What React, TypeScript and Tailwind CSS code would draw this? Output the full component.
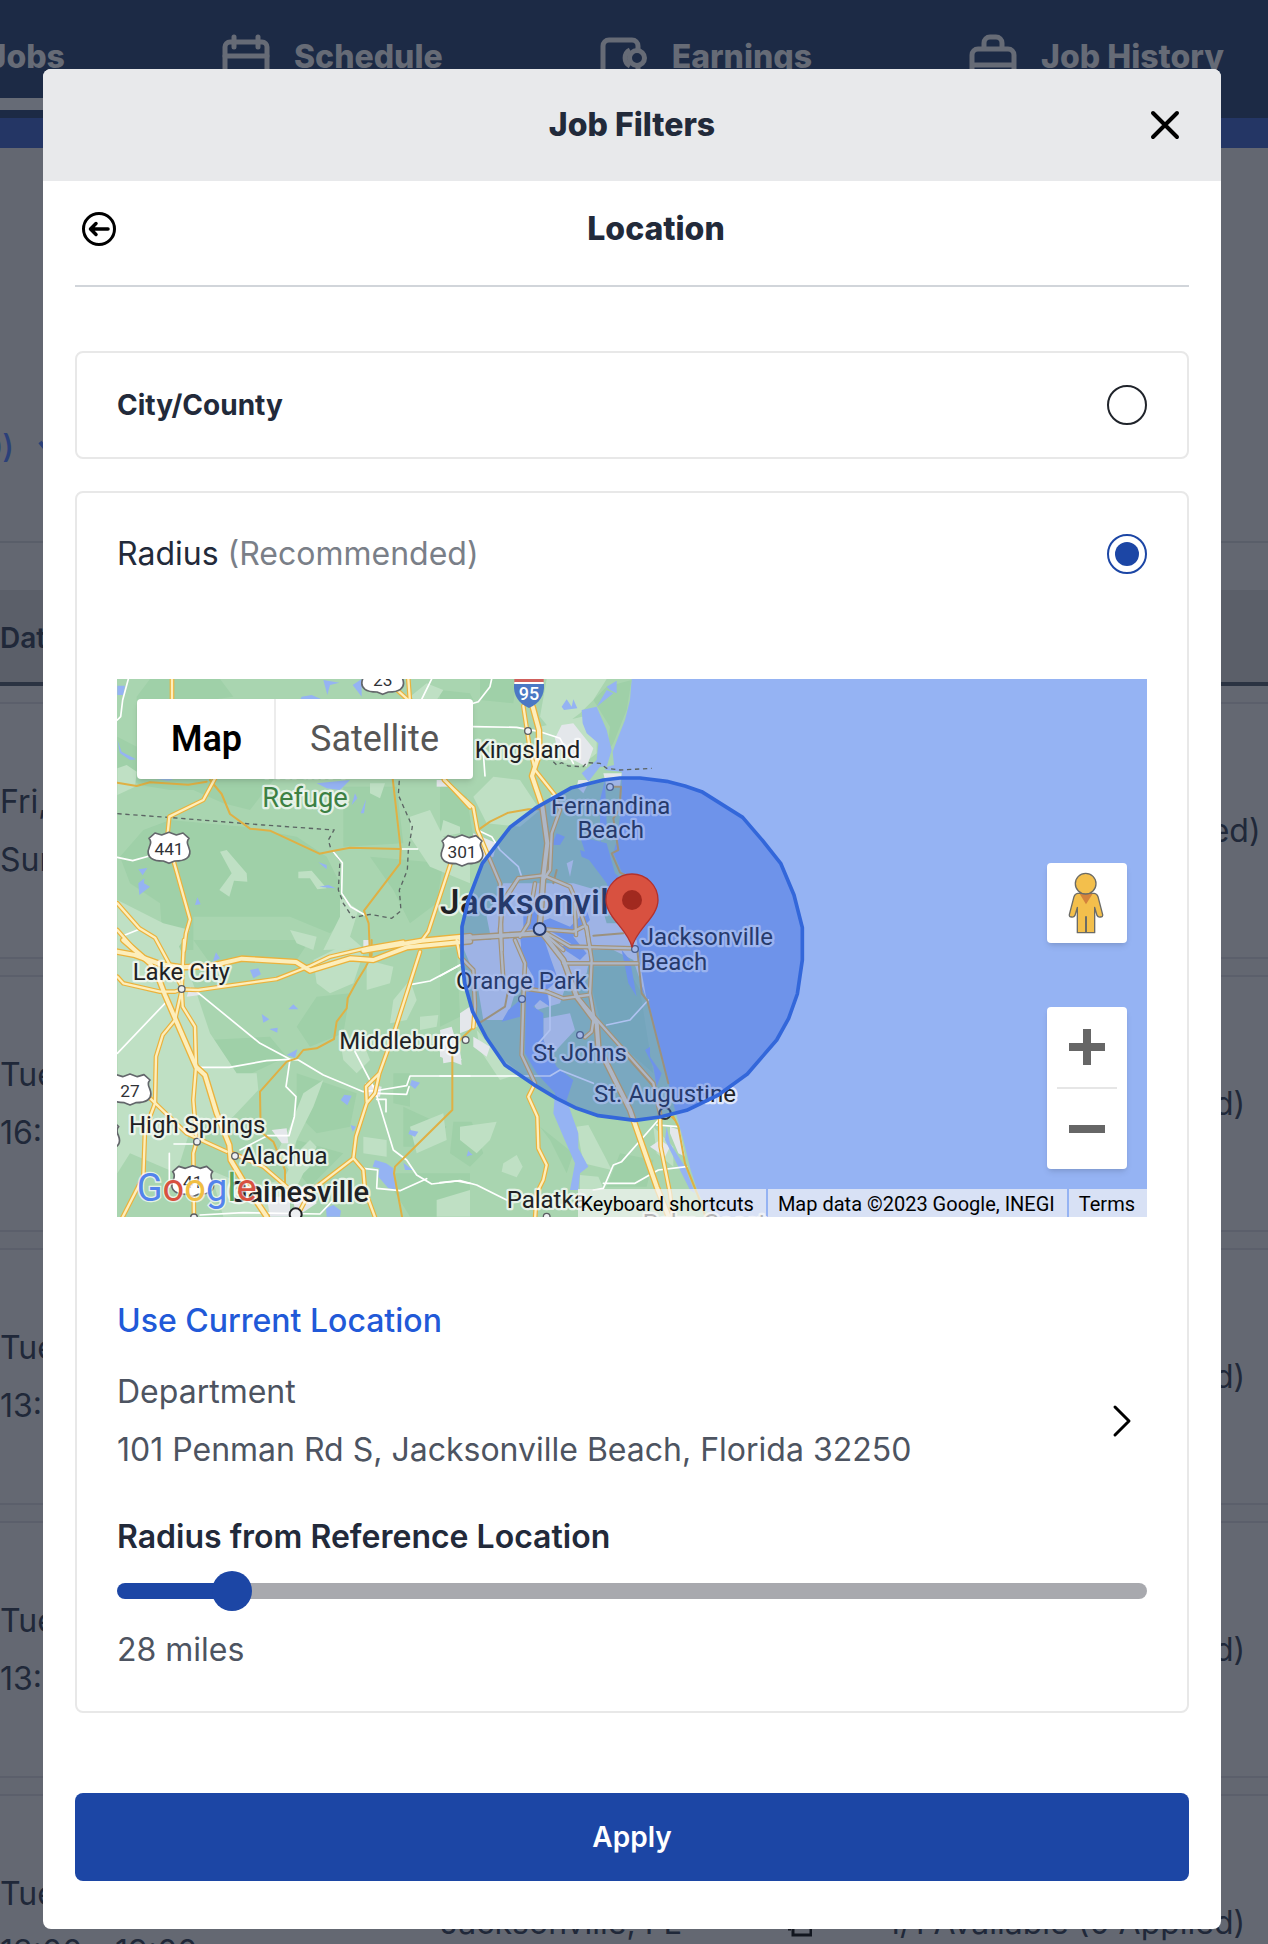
import React, { useState } from "react";

const days = [
  { day: "Fri, Aug 4", time: "Sun, Aug 6", note: "4/4 Available (0 Applied)" },
  { day: "Tue, Aug 8", time: "16:00 - 20:00", note: "1/1 Available (0 Applied)" },
  { day: "Tue, Aug 8", time: "13:00 - 19:00", note: "1/1 Available (0 Applied)" },
  { day: "Tue, Aug 8", time: "13:00 - 19:00", note: "1/1 Available (0 Applied)" },
  { day: "Tue, Aug 8", time: "13:00 - 19:00", note: "1/1 Available (0 Applied)" },
];

function CalendarIcon() {
  return (
    <svg className="h-11 w-12 overflow-visible" viewBox="0 0 48 44" fill="none" stroke="currentColor" strokeWidth="5" strokeLinecap="round">
      <rect x="3" y="7" width="42" height="38" rx="5" />
      <path d="M12 2v10M36 2v10M3 21h42" />
    </svg>
  );
}

function WalletIcon() {
  return (
    <svg className="h-11 w-12 overflow-visible" viewBox="0 0 48 44" fill="none" stroke="currentColor" strokeWidth="5">
      <path d="M38 16v-5a6 6 0 0 0-6-6H9a6 6 0 0 0-6 6v28a6 6 0 0 0 6 6h23a6 6 0 0 0 6-6v-8" />
      <circle cx="37" cy="23" r="7.500" />
      <path d="M30 15a9 9 0 0 0 0 16" />
    </svg>
  );
}

function CaseIcon() {
  return (
    <svg className="h-11 w-12 overflow-visible" viewBox="0 0 48 44" fill="none" stroke="currentColor" strokeWidth="5">
      <rect x="3" y="14" width="42" height="34" rx="6" />
      <path d="M15 14V8a6 6 0 0 1 6-6h6a6 6 0 0 1 6 6v6M3 30h42" />
    </svg>
  );
}

function NavItem({ label, children }: { label: string; children?: React.ReactNode }) {
  return (
    <a href="#" className="flex shrink-0 items-center gap-6 text-[32px] leading-10 font-extrabold">
      {children}
      <span>{label}</span>
    </a>
  );
}

function JobsPage() {
  return (
    <div className="absolute inset-0 overflow-hidden bg-[#636771] text-[32px] text-[#202839]" aria-hidden="true">
      <nav className="h-[118px] bg-[#1c2a45] text-[#666b76]">
        <div className="flex h-[98px] items-center justify-end gap-[157px] pt-4 pr-11">
          <NavItem label="Jobs" />
          <NavItem label="Schedule"><CalendarIcon /></NavItem>
          <NavItem label="Earnings"><WalletIcon /></NavItem>
          <NavItem label="Job History"><CaseIcon /></NavItem>
        </div>
        <div className="h-3 w-20 bg-[#666b76]" />
      </nav>
      <div className="h-[30px] bg-[#243665]" />
      <div className="flex h-[395px] items-end border-b-2 border-[#595e69] pb-[69px] text-[#2b4079]">
        <div className="flex w-[58px] items-center justify-end gap-6">
          <span className="font-medium">(0)</span>
          <svg className="h-6 w-5 shrink-0" viewBox="0 0 20 24" fill="none" stroke="currentColor" strokeWidth="4">
            <path d="M2 6l8 10 8-10" />
          </svg>
        </div>
      </div>
      <div className="mt-[47px] h-24 border-b-4 border-[#2b3342] bg-[#5b5f69] text-[28px] leading-24 font-semibold">Date</div>
      <div className="mt-4 flex flex-col gap-4">
        {days.map((d, i) => (
          <div key={i} className="grid h-[257px] grid-cols-[440px_348px_99px_1fr] items-center border-y-2 border-[#5b5f6b] bg-[#646872]">
            <div className="leading-[58px] whitespace-nowrap">
              <p>{d.day}</p>
              <p>{d.time}</p>
            </div>
            <span>Jacksonville, FL</span>
            <svg className="h-7 w-6" viewBox="0 0 24 28" fill="none" stroke="#12161f" strokeWidth="3">
              <path d="M5 2h18v24H5zM0 20h3" />
            </svg>
            <span className="whitespace-nowrap">{d.note}</span>
          </div>
        ))}
      </div>
    </div>
  );
}

type Pt = { x: number; y: number };

function Shield({ x, y, n }: Pt & { n: string }) {
  return (
    <g transform={`translate(${x} ${y})`}>
      <path
        d="M-42-46l20 6 22-8 22 8 20-6 18 16c-8 8-6 16-1 26 5 12 5 26-6 34-8 6-22 8-36 8l-17 7-17-7c-14 0-28-2-36-8-11-8-11-22-6-34 5-10 7-18-1-26z"
        fill="#fff" stroke="#63666b" strokeWidth="5" strokeLinejoin="round"
      />
      <text y="20" textAnchor="middle" fontSize="52" fill="#303236">{n}</text>
    </g>
  );
}

function Town({ x, y, children, dot, size = 72, anchor = "start", fill = "#202124", weight = 400 }: Pt & {
  children: string; dot?: [number, number]; size?: number; anchor?: "start" | "middle"; fill?: string; weight?: number;
}) {
  return (
    <g>
      {dot && <circle cx={dot[0]} cy={dot[1]} r={weight > 400 ? 18 : 10} fill="#eef0f2" stroke={weight > 400 ? "#202124" : "#5a5d61"} strokeWidth={weight > 400 ? 6 : 4} />}
      <text x={x} y={y} fontSize={size} textAnchor={anchor} fill={fill} fontWeight={weight} stroke="#fff" strokeOpacity="0.7" strokeWidth="14" strokeLinejoin="round" paintOrder="stroke">{children}</text>
    </g>
  );
}

const NW = "translate(-21 -27)";
const NE = "translate(969 -27)";
const SW = "translate(-21 783)";
const SE = "translate(969 783)";

const highways: [string, string][] = [
  [NW, "M760 842L935 812 1080 798"],
  [SW, "M40 0L120 70 148 120 165 165 258 380 285 405 320 520 358 615 362 660 410 740 470 830"],
  [SW, "M22 35L75 45 150 72 215 82 300 78 395 56 558 66 600 92 720 55 790 60 890 22 1080 4"],
  [NE, "M278 110L297 180 298 250 276 318 307 410 322 520 310 620 300 760"],
  [NE, "M60 805L180 797 300 790"],
  [SE, "M300-30L370 60 410 170 470 250 475 320 570 510 650 740 690 840"],
];

const mains: [string, string][] = [
  [NW, "M186 20V100"],
  [NW, "M318 320L280 390 178 440 172 500"],
  [NW, "M190 570L240 748 228 790 222 842"],
  [NW, "M22 700L88 775 135 803 215 950"],
  [NW, "M22 780L75 840"],
  [NW, "M845 45L900 95M895 27L900 95"],
  [NW, "M1022 580L955 785 935 812"],
  [NW, "M1000 325L1080 412"],
  [SW, "M22 110L40 130 150 155 195 155 215 148 265 150 500 117 600 78 660 50 780 22 880 5"],
  [SW, "M222 0L215 148 218 200 255 260 258 380 250 480 260 605 250 640 252 840"],
  [SW, "M215 150L195 240 158 285 138 350 135 490 105 570 100 710 36 835"],
  [SW, "M105 460L230 580 350 635M370 640L460 680 530 740"],
  [SW, "M930 35L855 270 808 400 768 440 770 485M808 400L795 460 770 490 738 590 730 655 600 755 555 840M730 655L760 690 765 750 798 840"],
  [NE, "M250 108L270 240 285 300 345 375 360 420 335 490 330 600 310 630"],
  [NE, "M12 330L100 412 112 480 180 640 185 840"],
  [NE, "M195 690L235 625 310 616 390 650 412 700 440 780 450 840"],
  [NE, "M235 625L190 690 180 780 190 930"],
  [NE, "M300 777L400 785 430 770M404 700L408 795M300 780L370 840M320 790L390 830 580 835"],
  [NE, "M240 800L265 760 285 640"],
  [SE, "M440-40L455 60 450 160 462 230 455 275 435 292"],
  [SE, "M370 70H592M250 145L320 155 370 175 445 165"],
  [SE, "M420 180L480 250 640 430 660 520 662 620 690 760 700 840"],
  [SE, "M225 0L255 70 250 180 245 345 285 430 265 470 292 530 295 625 320 675 310 720 290 760 285 840"],
  [SE, "M50 0L60 50 100 90 105 200 100 262"],
];

const minor: [string, string][] = [
  [NW, "M300 330L335 372 360 432 420 476 480 482 628 551 668 543 720 533 872 537"],
  [NW, "M22 338L80 348 120 337 235 344 290 335"],
  [NW, "M848 325L872 537 870 580 762 722 776 760 780 860"],
  [SW, "M785 0V45L765 85 740 125 713 175 710 205 680 245 672 297 620 325 580 330 560 355 530 365 450 455 452 575 490 605 525 690 525 740"],
  [SW, "M1090 262L1050 300 1027 340V510L900 635 855 680 852 700 878 840"],
  [NE, "M112 482L150 455 205 428 265 418 300 418"],
  [NE, "M520 350H543L538 420 520 445 535 540 515 550 540 608 568 620"],
  [NE, "M460 797L550 790M350 600L340 640"],
  [SE, "M592 30L605 160 622 182 685 430"],
  [SE, "M700 530L715 560 735 670 775 770 800 840"],
  [SE, "M120 248L195 200 210 120"],
  [SE, "M690 525L705 540M560 350L640 440"],
];

const whites: [string, string][] = [
  [NW, "M55 27L38 90 32 140 22 150M965 27L935 88M668 543L697 578 695 670 722 710 765 735M872 537H923M22 562L68 572 118 558M45 795L88 778"],
  [SW, "M22 340L165 190M260 155L450 310 540 358 565 360 640 405 760 455 810 450 890 437 900 408H1080"],
  [SW, "M270 382H358L470 362 540 358 528 440 558 470 553 530 537 587H472L390 630M735 335L795 450 850 630 890 660 920 705 965 732 1040 723 1080 730"],
  [SW, "M800 460L890 463 897 440M905 133L960 123 1050 75M760 685L803 690 800 745 870 752 950 716M178 640V740M270 825L400 818 630 822 665 785M192 612H250M800 478H828V515"],
  [NE, "M100 170L230 172 300 185 360 205 400 280M155 27L150 50 115 95 100 100M112 480L155 500 180 540 235 590 245 620M130 250L135 318"],
  [SE, "M0 108L60 75M0 408H330L360 390 460 430M0 728L60 722 110 735 200 780M655 540L545 665 520 675 490 745 460 750M490 730H585L655 690 740 680M650 555L715 560M500 255L570 240 625 180M330 150V270L295 310"],
];

function Roads({ list, color, width }: { list: [string, string][]; color: string; width: number }) {
  return (
    <g fill="none" stroke={color} strokeWidth={width} strokeLinejoin="round" strokeLinecap="round">
      {list.map(([t, d]) => <path key={t + d} transform={t} d={d} />)}
    </g>
  );
}

function MapDrawing() {
  return (
    <svg className="block h-[538px] w-full" viewBox="0 0 3090 1614" preserveAspectRatio="xMidYMid slice" fontFamily="Roboto, sans-serif" role="img" aria-label="Map of Jacksonville with the search radius">
      <rect x="-2000" width="7100" height="1614" fill="#95b3f3" />
      <path
        transform={NE}
        fill="#a9d5b0"
        d="M-3000 27H575L570 90 555 150 535 200 518 245 522 285 500 290 495 300 545 305 545 370 540 440 528 520 520 550 545 605 568 640 580 740 590 830 605 960 625 990 650 1100 688 1250 705 1320 730 1410 752 1500 775 1570 815 1650H-3000z"
      />
      <g fill="#9fd0a8">
        <path transform={NW} d="M120 27L330 27 370 80 300 90 480 90 490 330 420 420 340 400 250 360 180 360 90 345 22 300V200L80 230V80zM180 450L400 470 560 500 650 560 690 640 720 730 660 790 540 740H250V840H160L150 700 60 640 30 560 100 480zM700 350L860 350 880 520 700 530zM780 560L1000 580 980 700 900 760 850 660z" />
        <path transform={SW} d="M250 0H600L560 60 400 50 300 70zM290 300L480 290 530 350 340 440 290 400zM560 400L740 460 720 560 620 580 560 520zM850 400H900V500L850 490zM880 500L1010 560 960 620 880 620zM560 600L700 640 600 740 550 680zM820 700H1080V830H900zM620 170L720 160 700 280 600 320 560 260z" />
        <path transform={NE} d="M0 330L80 380 100 500 0 480zM120 27H230L220 100 120 90zM460 90L500 50 575 30 560 120 520 220 500 250 510 170zM0 60L90 70 100 90 0 90z" />
        <path transform={SE} d="M440 80H560L600 150 640 400 560 330 480 240zM300 560L400 640 380 700 330 600zM0 30L50 20 60 230 0 260zM540 640L640 660 620 740 500 740zM40 545H95L130 640 90 680 30 640z" />
      </g>
      <g fill="#bfe0c4">
        <path transform={NW} d="M22 295L50 285 80 305 75 350 22 375zM330 545L350 540 410 610 412 635 372 632 358 680 328 660 365 610zM565 605L605 602 650 655 622 658 600 625 565 625zM690 680L745 720 720 800 760 835 640 840 690 740zM900 440L960 420 1000 500 1080 560V640L960 590 900 500zM780 340H825L810 385 780 370zM540 780L620 800 610 840 560 820zM900 80L950 40 1000 60 960 120zM22 690L160 760 240 780 200 840H22z" />
        <path transform={SW} d="M22 0L200 0 260 160 300 280 380 400 440 400 445 450 360 540 250 540 200 700 60 640 22 700zM610 60L690 20 760 40 730 130 660 160 620 130zM850 180L900 120 920 180 890 240 840 250zM770 60L850 80 840 130 770 150zM580 460L640 420 610 500 560 600 540 660 600 680 560 720 500 640 540 560zM300 690L420 740 520 720 560 640 600 600 620 620 560 740 460 830 340 830zM900 560L1000 520 1010 600 920 640zM690 300L760 310 780 360 740 400 700 360zM930 230L985 225 980 260 930 270zM760 590L830 600 830 650 760 640zM980 780L1080 750V830H980z" />
        <path transform={NE} d="M320 27H500L460 90 420 130 340 190 300 140zM300 170L470 130 470 250 420 290 340 270 300 220zM100 380L160 320 240 330 300 420 240 470 140 460zM10 450L60 470 60 490 0 500z" />
        <path transform={SE} d="M410 560L445 555 495 650 515 690 430 670zM190 670L230 645 248 680 230 712 185 695zM60 560L170 545 150 600 110 640 60 600zM110 270L180 350 240 400 180 420 120 330zM420 705L475 710 490 745 420 750zM640 560L700 620 700 680 650 640z" />
      </g>
      <g fill="#e4e7eb">
        <path transform={NE} d="M345 205L365 165 400 160 420 185 460 235 440 290 400 270 350 230zM415 330L450 330 430 370 410 350zM100 490L170 520 160 560 90 580zM190 640L400 640 470 660 500 760 580 760 590 840H160L140 740zM380 580L400 570 390 620zM490 310L545 310 540 350 500 350zM0 330H20L0 350z" />
        <path transform={SE} d="M60 0H590L600 70 620 180 580 60 460 0 440 100 380 130 360 190 290 210 240 110 200 240 130 240 110 120zM310 235L390 220 405 270 340 340 310 320zM60 220L105 190 110 260 60 280zM100 290L150 320 140 350 100 320zM0 290L60 330 65 375 0 350zM630 620L660 600 690 620 675 650zM690 560L720 570 735 650 715 640 690 580z" />
        <path transform={SW} d="M990 270L1025 260 1055 360 1000 370zM765 430L815 440 810 470 770 470zM470 770H540V830H480zM485 570L530 565 535 610 515 610zM760 0H780V30L760 20zM240 140L270 165 230 170zM540 740L600 740 620 790 560 830z" />
        <path transform={NW} d="M980 330H1015V350H980z" />
      </g>
      <g fill="#95b3f3">
        <path transform={NW} d="M22 47H45L40 75H22zM575 80L605 75 640 90H570zM640 30L688 38 660 45 652 75zM728 45L755 27V80zM22 210L35 245 78 268 60 270 30 250zM85 598L112 594 98 616zM85 640L103 625 102 640 120 650 88 675zM262 682L272 703 255 705zM625 577L650 585 650 598zM628 650L655 645 678 655 655 653zM735 370L742 385 725 405zM768 388L762 430 752 430zM620 340L720 330 690 360 650 355zM140 328H190L175 332z" />
        <path transform={SW} d="M318 37L330 55 308 65zM420 90L445 85 453 103 430 115zM550 193L565 208 535 208zM455 222L478 238 460 248zM478 267L503 263 502 278zM530 345L562 328 555 353zM692 480L703 464 725 467 712 496zM905 420L930 428 915 447 900 435zM795 660L828 670 850 685 858 748 835 745 805 710 808 685 788 680zM880 668L908 690 885 690zM900 570L925 575 915 590 895 582zM648 805L670 795 693 812 690 830H650zM722 555L738 560 728 575zM1075 630L1080 645 1070 650z" />
        <path transform={NE} d="M365 110L380 88 395 110 400 88 412 115 372 120zM425 120L470 110 500 60 520 70 470 110 500 180 515 240 500 290 480 290 445 335 425 310 470 270 475 220 440 190 428 160zM500 50L530 32 530 70 510 60zM420 500L500 520 525 610 560 640 570 740 560 760 520 700 500 640 440 560zM350 490L375 500 360 525 335 525zM480 390L495 330 500 460 480 520zM420 540L480 560 460 575 425 560zM250 690L300 730 290 760 330 745 390 770 440 720 450 750 400 800 440 850 310 770 260 780 280 850 240 850 250 780z" />
        <path transform={SE} d="M240-10H310L330 50 355 120 320 150 330 200 300 180 280 200 310 220 310 300 350 380 400 420 380 480 415 580 415 625 445 680 420 700 415 750H390L405 670 370 590 340 520 345 460 290 400 255 340 258 160 280 110 250 60zM185 245L205 210 240 180 240 230zM545 30L570 60 590 170 565 130zM615 330L630 320 630 350 665 400 650 440 640 380zM680 560L690 610 735 680 765 760 750 750 700 650 675 600zM88 635L98 645 80 647z" />
        <path transform={SE} d="M360 20L400 10 440 40 420 60zM380 100L440 130 420 140z" />
      </g>
      <g fill="none" stroke="#5b6463" strokeWidth="4" strokeDasharray="13 11">
        <path transform={NW} d="M22 431L160 441 460 465 672 480 655 510 662 535 690 570 685 660 700 700 728 743 780 733 845 745 873 722 868 660 892 600 895 540 907 470 885 420 865 375 868 330" />
        <path transform={NE} d="M340 275L350 285 365 278 385 288 430 290 440 278 480 280 500 295 540 300 635 295" />
      </g>
      <Roads list={whites} color="#ffffff" width={5} />
      <Roads list={minor} color="#dfb044" width={6} />
      <Roads list={mains} color="#ebb23c" width={14} />
      <Roads list={highways} color="#ebb23c" width={20} />
      <Roads list={mains} color="#fdeebb" width={7} />
      <Roads list={highways} color="#fdeebb" width={12} />

      <g transform={NW}>
        <Shield x={177} y={535} n="441" />
        <Shield x={818} y={28} n="23" />
        <Shield x={1056} y={543} n="301" />
        <Town x={585} y={322} size={82} anchor="middle" fill="#3c8043">Wildlife</Town>
        <Town x={585} y={410} size={82} anchor="middle" fill="#3c8043">Refuge</Town>
      </g>
      <g transform={SW}>
        <Shield x={-34} y={590} n="98" />
        <Shield x={60} y={450} n="27" />
        <Shield x={248} y={725} n="41" />
        <Town x={68} y={119} dot={[215, 147]}>Lake City</Town>
        <Town x={688} y={326} dot={[1067, 300]}>Middleburg</Town>
        <Town x={57} y={578} dot={[261, 605]}>High Springs</Town>
        <Town x={393} y={673} dot={[375, 648]}>Alachua</Town>
        <Town x={353} y={787} size={87} weight={500} dot={[557, 823]}>Gainesville</Town>
        <circle cx="252" cy="832" r="10" fill="#eef0f2" stroke="#5a5d61" strokeWidth="4" />
      </g>
      <g transform={NE}>
        <path d="M223 27H311V40H223z" fill="#d0605c" />
        <path d="M223 36H311V42H223z" fill="#fff" />
        <path d="M222 42H312C314 75 300 100 267 114 234 100 220 75 222 42z" fill="#4b78c4" />
        <text x="267" y="91" fontSize="54" fontWeight="500" fill="#fff" textAnchor="middle">95</text>
        <Town x={104} y={263} dot={[264, 183]}>Kingsland</Town>
        <Town x={512} y={432} anchor="middle" dot={[510, 351]}>Fernandina</Town>
        <Town x={512} y={504} anchor="middle">Beach</Town>
        <Town x={0} y={733} size={106} weight={500} dot={[299, 777]}>Jacksonville</Town>
        <Town x={602} y={826} dot={[585, 837]}>Jacksonville</Town>
        <Town x={602} y={899}>Beach</Town>
      </g>
      <g transform={SE}>
        <Town x={48} y={148} dot={[246, 177]}>Orange Park</Town>
        <Town x={279} y={364} dot={[420, 285]}>St Johns</Town>
        <circle cx="675" cy="520" r="17" fill="none" stroke="#303236" strokeWidth="6" />
        <Town x={462} y={487}>St. Augustine</Town>
        <Town x={200} y={803} dot={[320, 830]}>Palatka</Town>
        <Town x={608} y={872}>Palm Coast</Town>
      </g>
      <path
        transform={NE}
        d="M490 330L540 324H600L680 334 735 348 785 365 908 442 968 512 1022 580 1062 675 1087 773V870L1072 972 1046 1045 1010 1110 922 1212 835 1275 740 1321 660 1341 585 1351 475 1337 410 1315 350 1285 280 1243 195 1185 140 1105 98 1025 74 940 66 870V770L85 690 127 580 210 472 290 412 395 353z"
        fill="#3263dc" fillOpacity="0.39" stroke="#3367da" strokeWidth="11" strokeLinejoin="round"
      />
      <g transform={NE}>
        <path d="M576 832C566 780 498 742 498 690a78 78 0 0 1 156 0C654 742 586 780 576 832z" fill="#d85140" stroke="#b3312c" strokeWidth="4" />
        <circle cx="576" cy="690" r="30" fill="#a1291f" />
      </g>
      <text x="59" y="1567" fontSize="114" stroke="#fff" strokeOpacity="0.7" strokeWidth="8" paintOrder="stroke">
        <tspan fill="#5383ec">G</tspan>
        <tspan fill="#d85140">o</tspan>
        <tspan fill="#f1be42">o</tspan>
        <tspan fill="#5383ec">g</tspan>
        <tspan fill="#58a55c">l</tspan>
        <tspan fill="#d85140">e</tspan>
      </text>
    </svg>
  );
}

function Pegman() {
  return (
    <svg className="size-20" viewBox="0 0 240 240" stroke="#6b6b66" strokeWidth="4" strokeLinejoin="round">
      <path d="M92 91H142Q150 92 153 101L167 155Q168 162 160 162 153 163 150 157L143 133V209H91V133L84 157Q81 163 74 162 66 162 67 155L81 101Q84 92 92 91z" fill="#f3bf4c" />
      <path d="M117 160V209" strokeWidth="6" />
      <path d="M98 92H137L117 124z" fill="#d4823c" stroke="none" />
      <circle cx="116" cy="62" r="31" fill="#f3bf4c" />
    </svg>
  );
}

function RadiusMap() {
  return (
    <div className="relative mt-[104px] overflow-hidden font-['Roboto',sans-serif]">
      <MapDrawing />
      <div className="absolute top-5 left-5 flex h-20 overflow-hidden rounded-[4px] bg-white text-[36px] shadow-md">
        <button className="w-[139px] border-r-2 border-[#ececec] pl-0.5 font-semibold text-black">Map</button>
        <button className="w-[197px] text-[#565656]">Satellite</button>
      </div>
      <div className="absolute right-5 bottom-12 flex flex-col gap-16">
        <button aria-label="Street View" className="size-20 rounded-[4px] bg-white shadow-md"><Pegman /></button>
        <div className="flex flex-col items-center rounded-[4px] bg-white shadow-md">
          <button aria-label="Zoom in" className="size-20">
            <svg className="size-20" viewBox="0 0 80 80" fill="#666"><path d="M22 36h14V22h8v14h14v8H44v14h-8V44H22z" /></svg>
          </button>
          <div className="h-0.5 w-15 bg-[#e6e6e6]" />
          <button aria-label="Zoom out" className="size-20">
            <svg className="size-20" viewBox="0 0 80 80" fill="#666"><path d="M22 36h36v8H22z" /></svg>
          </button>
        </div>
      </div>
      <div className="absolute right-0 bottom-0 flex h-7 gap-0.5 text-[20px] leading-[30px] text-black">
        <button className="bg-[#f5f5f5]/70 pr-3 pl-0.5">Keyboard shortcuts</button>
        <span className="bg-[#f5f5f5]/70 pr-3 pl-2.5">Map data ©2023 Google, INEGI</span>
        <a href="#" className="bg-[#f5f5f5]/70 pr-3 pl-2.5">Terms</a>
      </div>
    </div>
  );
}

const MIN = 5;
const MAX = 245;
const radio =
  "size-10 shrink-0 appearance-none rounded-full border-2 border-[#20242b] bg-clip-content p-[6px] checked:border-[#1c46a5] checked:bg-[#1c46a5]";

export default function App() {
  const [mode, setMode] = useState("radius");
  const [miles, setMiles] = useState(28);
  const part = (miles - MIN) / (MAX - MIN);

  return (
    <div className="relative min-h-screen overflow-hidden font-['Inter',sans-serif]">
      <JobsPage />
      <div className="relative pt-[69px] pr-[47px] pb-[15px] pl-[43px]">
        <section role="dialog" aria-label="Job Filters" className="overflow-hidden rounded-lg bg-white text-[#222a3a]">
          <header className="grid h-28 grid-cols-[1fr_auto_1fr] items-center bg-[#e8e9eb] px-10">
            <h1 className="col-start-2 text-[32px] font-extrabold">Job Filters</h1>
            <button aria-label="Close" className="justify-self-end">
              <svg className="size-8" viewBox="0 0 32 32" fill="none" stroke="#000" strokeWidth="4" strokeLinecap="round">
                <path d="M4 4l24 24M28 4L4 28" />
              </svg>
            </button>
          </header>
          <div className="px-8 pb-12">
            <div className="border-b-2 border-[#d1d5da] pb-2">
              <div className="flex h-24 items-center">
                <button aria-label="Back" className="flex w-12 justify-center">
                  <svg className="size-9" viewBox="0 0 36 36" fill="none" stroke="#000" strokeWidth="3" strokeLinecap="round" strokeLinejoin="round">
                    <circle cx="18" cy="18" r="15.500" />
                    <path d="M27 18H10M15 12.500L9.500 18l5.500 5.500" strokeWidth="3.500" />
                  </svg>
                </button>
                <h2 className="flex-1 text-center text-[32px] font-extrabold">Location</h2>
              </div>
            </div>

            <label className="mt-16 flex h-27 items-center justify-between rounded-lg border-2 border-[#e8e8e8] px-10 text-[28px] font-bold">
              City/County
              <input type="radio" name="mode" className={radio} checked={mode === "city"} onChange={() => setMode("city")} />
            </label>

            <div className="mt-8 rounded-lg border-2 border-[#e8e8e8] px-10 pt-10 pb-[37px] text-[32px]">
              <label className="flex h-[42px] items-center justify-between">
                <span>Radius <span className="text-[#7a7f88]">(Recommended)</span></span>
                <input type="radio" name="mode" className={radio} checked={mode === "radius"} onChange={() => setMode("radius")} />
              </label>

              <RadiusMap />

              <button className="mt-20 block leading-12 font-medium text-[#2159d8]">Use Current Location</button>
              <button className="mt-[18px] flex w-full items-center justify-between text-left leading-[58px] text-[#4d5461]">
                <span>
                  <span className="block">Department</span>
                  <span className="block">101 Penman Rd S, Jacksonville Beach, Florida 32250</span>
                </span>
                <svg className="mr-3 h-9 w-6" viewBox="0 0 24 36" fill="none" stroke="#000" strokeWidth="3" strokeLinecap="round" strokeLinejoin="round">
                  <path d="M4 4l14 14L4 32" />
                </svg>
              </button>

              <label htmlFor="miles" className="mt-[34px] block leading-12 font-semibold">Radius from Reference Location</label>
              <input
                id="miles"
                type="range"
                min={MIN}
                max={MAX}
                value={miles}
                onChange={(e) => setMiles(Number(e.target.value))}
                className="mt-[10px] block h-10 w-full appearance-none bg-transparent [&::-webkit-slider-runnable-track]:h-4 [&::-webkit-slider-runnable-track]:rounded-full [&::-webkit-slider-runnable-track]:bg-[image:var(--track)] [&::-webkit-slider-thumb]:-mt-3 [&::-webkit-slider-thumb]:size-10 [&::-webkit-slider-thumb]:appearance-none [&::-webkit-slider-thumb]:rounded-full [&::-webkit-slider-thumb]:bg-[#1c46a5]"
                style={{ "--track": `linear-gradient(to right, #1c46a5 ${part * 100 + 1}%, #a8a9ae ${part * 100 + 1}%)` } as React.CSSProperties}
              />
              <p className="mt-[15px] leading-12 text-[#4d5461]">{miles} miles</p>
            </div>

            <button className="mt-20 h-22 w-full rounded-lg bg-[#1c46a5] text-[28px] font-semibold text-white">Apply</button>
          </div>
        </section>
      </div>
    </div>
  );
}
